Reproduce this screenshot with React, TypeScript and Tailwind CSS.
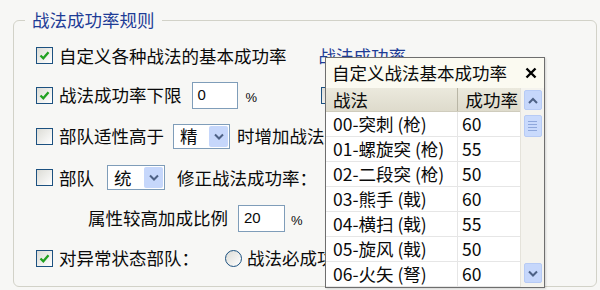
import React from 'react';

function Check({ checked }: { checked?: boolean }) {
  return (
    <span className="flex h-[17px] w-[17px] shrink-0 items-center justify-center border border-[#1c5180] bg-gradient-to-br from-[#dcdcd6] to-white">
      {checked && (
        <svg viewBox="0 0 11 11" className="h-[11px] w-[11px]">
          <path d="M1.5 5.5 L4.3 8.3 L9.5 2.2" stroke="#21a121" strokeWidth="2.3" fill="none" />
        </svg>
      )}
    </span>
  );
}

function Chevron({ up, color = '#4d6185' }: { up?: boolean; color?: string }) {
  return (
    <svg viewBox="0 0 10 7" className="h-[7px] w-[10px]">
      <path d={up ? 'M1 6 L5 2 L9 6' : 'M1 1.5 L5 5.5 L9 1.5'} stroke={color} strokeWidth="2" fill="none" />
    </svg>
  );
}

function Select({ value, className }: { value: string; className: string }) {
  return (
    <div className={`flex h-[25px] items-center justify-between border border-[#7f9db9] bg-white pl-[6px] pr-[1px] ${className}`}>
      <span>{value}</span>
      <span className="flex h-[21px] w-[19px] items-center justify-center rounded-[2px] bg-[#c6d7fb]">
        <Chevron />
      </span>
    </div>
  );
}

function TextBox({ value, className }: { value: string; className: string }) {
  return (
    <div className={`flex h-[27px] items-center border border-[#7f9db9] bg-white pl-[5px] font-['Liberation_Sans',sans-serif] text-[15px] ${className}`}>
      {value}
    </div>
  );
}

const skills = [
  ['00-突刺 (枪)', '60'],
  ['01-螺旋突 (枪)', '55'],
  ['02-二段突 (枪)', '50'],
  ['03-熊手 (戟)', '60'],
  ['04-横扫 (戟)', '55'],
  ['05-旋风 (戟)', '50'],
  ['06-火矢 (弩)', '60'],
];

export default function App() {
  return (
    <div className="relative h-[290px] w-[600px] overflow-hidden bg-[#f7f7f5] pl-[13px] pt-[8px] font-['Noto_Sans_CJK_SC',sans-serif] text-[17.5px] leading-[24px] text-[#0a0a0a]">
      <fieldset className="h-[279px] w-[584px] rounded-[6px] border border-[#d2d2c8]">
        <legend className="ml-[11px] px-[7px] text-[#1e3c96]">战法成功率规则</legend>
        <div className="pl-[22px] pt-[4px] whitespace-nowrap">
          <div className="flex h-[39px] items-center">
            <Check checked />
            <span className="ml-[6px]">自定义各种战法的基本成功率</span>
            <span className="ml-[32px] text-[#1e3c96]">战法成功率</span>
          </div>
          <div className="flex h-[40px] items-center">
            <Check checked />
            <span className="ml-[6px]">战法成功率下限</span>
            <TextBox value="0" className="ml-[10px] w-[46px]" />
            <span className="ml-[8px] mt-[6px] font-['Liberation_Sans',sans-serif] text-[13px]">%</span>
            <span className="ml-[64px]"><Check /></span>
          </div>
          <div className="flex h-[42px] items-center">
            <Check />
            <span className="ml-[6px]">部队适性高于</span>
            <Select value="精" className="ml-[9px] w-[57px]" />
            <span className="ml-[7px]">时增加战法成功率</span>
          </div>
          <div className="flex h-[41px] items-center">
            <Check />
            <span className="ml-[6px]">部队</span>
            <Select value="统" className="ml-[13px] w-[58px]" />
            <span className="ml-[12px]">修正战法成功率：</span>
          </div>
          <div className="flex h-[40px] items-center pl-[52px]">
            <span>属性较高加成比例</span>
            <TextBox value="20" className="ml-[10px] w-[47px]" />
            <span className="ml-[6px] mt-[6px] font-['Liberation_Sans',sans-serif] text-[13px]">%</span>
          </div>
          <div className="flex h-[40px] items-center">
            <Check checked />
            <span className="ml-[6px]">对异常状态部队：</span>
            <span className="ml-[26px] h-[17px] w-[17px] rounded-full border border-[#1c5180] bg-gradient-to-br from-[#dcdcd6] to-white" />
            <span className="ml-[5px]">战法必成功</span>
          </div>
        </div>
      </fieldset>

      <div className="absolute left-[325px] top-[57px] w-[220px] border border-[#6e6e6e] bg-white shadow-[1px_1px_2px_rgba(0,0,0,0.15)]">
        <div className="flex h-[30px] items-center justify-between bg-[#fbfaf1] pl-[6px] pr-[7px]">
          <span>自定义战法基本成功率</span>
          <svg viewBox="0 0 12 12" className="h-[12px] w-[12px]">
            <path d="M1.5 1.5 L10.5 10.5 M10.5 1.5 L1.5 10.5" stroke="#000" strokeWidth="2.4" />
          </svg>
        </div>
        <div className="flex">
          <div className="w-[194px]">
            <div className="flex h-[24px] border-b border-[#cfccbd] bg-gradient-to-b from-[#ebe9dd] to-[#dedbcc]">
              <div className="w-[132px] border-r border-[#b9b6a6] pl-[7px]">战法</div>
              <div className="flex-1 pr-[2px] text-right">成功率</div>
            </div>
            {skills.map(([name, rate]) => (
              <div key={name} className="flex h-[25px] border-b border-[#e6e6e6]">
                <div className="w-[132px] border-r border-[#e6e6e6] pl-[7px]">{name}</div>
                <div className="flex-1 pl-[4px]">{rate}</div>
              </div>
            ))}
          </div>
          <div className="flex w-[24px] flex-col items-center border-l border-[#e4e2da] bg-[#f4f3ee] pb-[4px] pt-[2px]">
            <span className="flex h-[20px] w-[18px] items-center justify-center rounded-[2px] border border-[#b7cbf5] bg-[#c6d7fb]">
              <Chevron up />
            </span>
            <span className="mt-[5px] flex h-[22px] w-[18px] flex-col items-center justify-center gap-[2px] rounded-[2px] border border-[#b7cbf5] bg-[#c9dafc]">
              <span className="h-px w-[9px] bg-[#8fa8dc]" />
              <span className="h-px w-[9px] bg-[#8fa8dc]" />
              <span className="h-px w-[9px] bg-[#8fa8dc]" />
              <span className="h-px w-[9px] bg-[#8fa8dc]" />
            </span>
            <span className="flex-1" />
            <span className="flex h-[20px] w-[18px] items-center justify-center rounded-[2px] border border-[#b7cbf5] bg-[#c6d7fb]">
              <Chevron />
            </span>
          </div>
        </div>
      </div>
    </div>
  );
}
